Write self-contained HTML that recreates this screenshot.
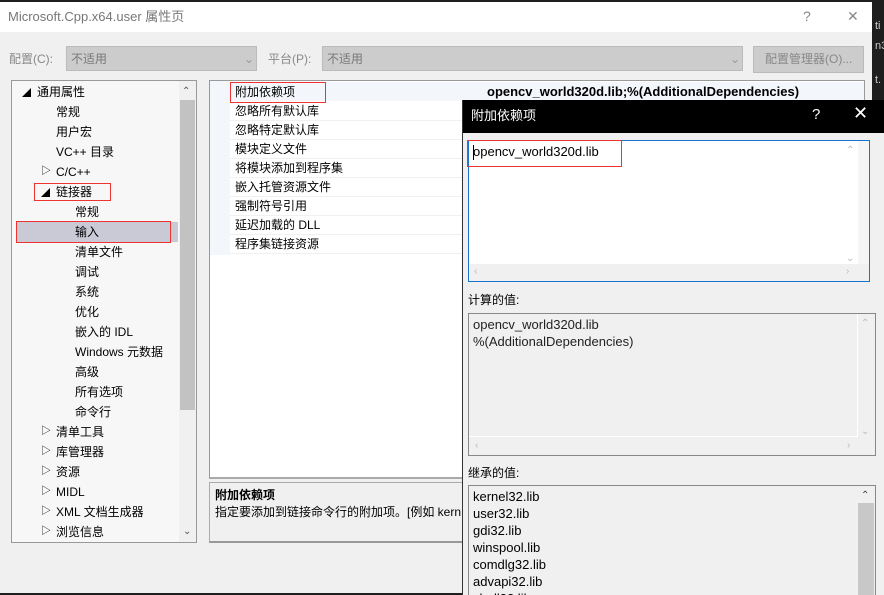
<!DOCTYPE html><html><head><meta charset="utf-8"><style>
*{box-sizing:border-box;margin:0;padding:0}
html{overflow:hidden;width:884px;height:595px}
body{width:884px;height:595px;overflow:hidden;background:#1e1e1e;font-family:"Liberation Sans","Noto Sans CJK SC",sans-serif;font-size:12px;color:#000;position:relative}
.a{position:absolute}
.t{position:absolute;white-space:nowrap;line-height:16px}
</style></head><body>
<div class="a" style="left:0;top:2px;width:872px;height:591px;background:#f0f0f0"></div>
<div class="a" style="left:0;top:2px;width:872px;height:30px;background:#fff"></div>
<div class="t" style="left:8px;top:9px;color:#777;font-size:13px">Microsoft.Cpp.x64.user 属性页</div>
<div class="t" style="left:803px;top:8px;color:#888;font-size:14px">?</div>
<div class="t" style="left:847px;top:8px;color:#888;font-size:14px">✕</div>
<div class="t" style="left:875px;top:18px;color:#ccc;font-size:11px">ti</div>
<div class="t" style="left:875px;top:38px;color:#ccc;font-size:11px">n3</div>
<div class="t" style="left:875px;top:72px;color:#ccc;font-size:11px">t.</div>
<div class="t" style="left:9px;top:51px;color:#888">配置(C):</div>
<div class="a" style="left:66px;top:46px;width:191px;height:25px;background:#ccc;border:1px solid #bbb"></div>
<div class="t" style="left:71px;top:51px;color:#777">不适用</div>
<div class="t" style="left:244px;top:51px;color:#999">⌄</div>
<div class="t" style="left:268px;top:51px;color:#888">平台(P):</div>
<div class="a" style="left:322px;top:46px;width:421px;height:25px;background:#ccc;border:1px solid #bbb"></div>
<div class="t" style="left:327px;top:51px;color:#777">不适用</div>
<div class="t" style="left:730px;top:51px;color:#999">⌄</div>
<div class="a" style="left:753px;top:46px;width:111px;height:27px;background:#ccc;border:1px solid #bbb"></div>
<div class="t" style="left:765px;top:51px;color:#888">配置管理器(O)...</div>
<!-- tree -->
<div class="a" style="left:11px;top:80px;width:186px;height:463px;background:#f7f7f7;border:1px solid #999"></div>
<div class="a" style="left:179px;top:81px;width:17px;height:461px;background:#f0f0f0"></div>
<div class="a" style="left:180px;top:100px;width:15px;height:310px;background:#c2c2c2"></div>
<div class="t" style="left:182px;top:84px;color:#555;font-size:10px">⌃</div>
<div class="t" style="left:183px;top:524px;color:#555;font-size:10px">⌄</div>
<div class="a" style="left:16px;top:222px;width:162px;height:20px;background:#c9cad6"></div>
<div class="a" style="left:16px;top:221px;width:155px;height:22px;border:1px solid #e33"></div>
<div class="a" style="left:34px;top:183px;width:77px;height:18px;border:1px solid #e33"></div>
<div class="t" style="left:22px;top:85px;font-size:9px">◢</div><div class="t" style="left:37px;top:84px">通用属性</div>
<div class="t" style="left:56px;top:104px">常规</div>
<div class="t" style="left:56px;top:124px">用户宏</div>
<div class="t" style="left:56px;top:144px">VC++ 目录</div>
<div class="t" style="left:41px;top:164px;font-size:10px">▷</div><div class="t" style="left:56px;top:164px">C/C++</div>
<div class="t" style="left:41px;top:185px;font-size:9px">◢</div><div class="t" style="left:56px;top:184px">链接器</div>
<div class="t" style="left:75px;top:204px">常规</div>
<div class="t" style="left:75px;top:224px">输入</div>
<div class="t" style="left:75px;top:244px">清单文件</div>
<div class="t" style="left:75px;top:264px">调试</div>
<div class="t" style="left:75px;top:284px">系统</div>
<div class="t" style="left:75px;top:304px">优化</div>
<div class="t" style="left:75px;top:324px">嵌入的 IDL</div>
<div class="t" style="left:75px;top:344px">Windows 元数据</div>
<div class="t" style="left:75px;top:364px">高级</div>
<div class="t" style="left:75px;top:384px">所有选项</div>
<div class="t" style="left:75px;top:404px">命令行</div>
<div class="t" style="left:41px;top:424px;font-size:10px">▷</div><div class="t" style="left:56px;top:424px">清单工具</div>
<div class="t" style="left:41px;top:444px;font-size:10px">▷</div><div class="t" style="left:56px;top:444px">库管理器</div>
<div class="t" style="left:41px;top:464px;font-size:10px">▷</div><div class="t" style="left:56px;top:464px">资源</div>
<div class="t" style="left:41px;top:484px;font-size:10px">▷</div><div class="t" style="left:56px;top:484px">MIDL</div>
<div class="t" style="left:41px;top:504px;font-size:10px">▷</div><div class="t" style="left:56px;top:504px">XML 文档生成器</div>
<div class="t" style="left:41px;top:524px;font-size:10px">▷</div><div class="t" style="left:56px;top:524px">浏览信息</div>
<!-- grid -->
<div class="a" style="left:209px;top:80px;width:656px;height:399px;background:#fff;border:1px solid #999;border-bottom:2px solid #aaa"></div>
<div class="a" style="left:210px;top:81px;width:20px;height:174px;background:#f3f6fb"></div>
<div class="a" style="left:230px;top:82px;width:634px;height:19px;background:#f3f6fb"></div>
<div class="a" style="left:230px;top:82px;width:96px;height:21px;border:1px solid #e33"></div>
<div class="t" style="left:235px;top:84px">附加依赖项</div>
<div class="t" style="left:487px;top:84px;font-weight:bold;font-size:13px">opencv_world320d.lib;%(AdditionalDependencies)</div>
<div class="a" style="left:230px;top:120px;width:234px;height:0;border-top:1px solid #eef0f4"></div>
<div class="a" style="left:230px;top:139px;width:234px;height:0;border-top:1px solid #eef0f4"></div>
<div class="a" style="left:230px;top:158px;width:234px;height:0;border-top:1px solid #eef0f4"></div>
<div class="a" style="left:230px;top:177px;width:234px;height:0;border-top:1px solid #eef0f4"></div>
<div class="a" style="left:230px;top:196px;width:234px;height:0;border-top:1px solid #eef0f4"></div>
<div class="a" style="left:230px;top:215px;width:234px;height:0;border-top:1px solid #eef0f4"></div>
<div class="a" style="left:230px;top:234px;width:234px;height:0;border-top:1px solid #eef0f4"></div>
<div class="a" style="left:230px;top:253px;width:234px;height:0;border-top:1px solid #eef0f4"></div>
<div class="t" style="left:235px;top:103px">忽略所有默认库</div>
<div class="t" style="left:235px;top:122px">忽略特定默认库</div>
<div class="t" style="left:235px;top:141px">模块定义文件</div>
<div class="t" style="left:235px;top:160px">将模块添加到程序集</div>
<div class="t" style="left:235px;top:179px">嵌入托管资源文件</div>
<div class="t" style="left:235px;top:198px">强制符号引用</div>
<div class="t" style="left:235px;top:217px">延迟加载的 DLL</div>
<div class="t" style="left:235px;top:236px">程序集链接资源</div>
<div class="a" style="left:209px;top:482px;width:300px;height:61px;background:#f0f0f0;border:1px solid #aaa;border-bottom:2px solid #999"></div>
<div class="t" style="left:215px;top:487px;font-weight:bold">附加依赖项</div>
<div class="t" style="left:215px;top:504px">指定要添加到链接命令行的附加项。[例如 kern</div>
<!-- inner dialog -->
<div class="a" style="left:462px;top:100px;width:422px;height:495px;background:#f0f0f0;border-left:1px solid #333;overflow:hidden">
<div class="a" style="left:0;top:0;width:422px;height:33px;background:#000"></div>
<div class="t" style="left:8px;top:8px;color:#fff;font-size:13px">附加依赖项</div>
<div class="t" style="left:349px;top:7px;color:#fff;font-size:15px">?</div>
<div class="t" style="left:390px;top:5px;color:#fff;font-size:18px">✕</div>
<div class="a" style="left:5px;top:40px;width:402px;height:142px;background:#fff;border:1px solid #1a73d0"></div>
<div class="a" style="left:395px;top:41px;width:11px;height:123px;background:#f5f5f5"></div>
<div class="a" style="left:6px;top:164px;width:400px;height:17px;background:#f0f0f0"></div>
<div class="t" style="left:383px;top:43px;color:#bbb;font-size:10px">⌃</div>
<div class="t" style="left:383px;top:151px;color:#bbb;font-size:10px">⌄</div>
<div class="t" style="left:11px;top:164px;color:#bbb;font-size:10px">‹</div>
<div class="t" style="left:383px;top:164px;color:#bbb;font-size:10px">›</div>
<div class="a" style="left:4px;top:40px;width:155px;height:27px;border:1px solid #e33"></div>
<div class="a" style="left:10px;top:45px;width:1px;height:15px;background:#000"></div>
<div class="t" style="left:10px;top:44px;font-size:13px">opencv_world320d.lib</div>
<div class="t" style="left:5px;top:192px">计算的值:</div>
<div class="a" style="left:5px;top:213px;width:408px;height:143px;border:1px solid #888"></div>
<div class="a" style="left:6px;top:214px;width:389px;height:123px;border-right:1px solid #fff;border-bottom:1px solid #fff"></div>
<div class="t" style="left:10px;top:217px;font-size:13px;color:#222">opencv_world320d.lib</div>
<div class="t" style="left:10px;top:234px;font-size:13px;color:#222">%(AdditionalDependencies)</div>
<div class="t" style="left:398px;top:216px;color:#bbb;font-size:10px">⌃</div>
<div class="t" style="left:398px;top:324px;color:#bbb;font-size:10px">⌄</div>
<div class="t" style="left:12px;top:338px;color:#bbb;font-size:10px">‹</div>
<div class="t" style="left:384px;top:338px;color:#bbb;font-size:10px">›</div>
<div class="t" style="left:5px;top:365px">继承的值:</div>
<div class="a" style="left:5px;top:385px;width:408px;height:115px;border:1px solid #888"></div>
<div class="a" style="left:395px;top:403px;width:16px;height:92px;background:#c8c8c8"></div>
<div class="t" style="left:398px;top:388px;color:#444;font-size:10px">⌃</div>
<div class="t" style="left:10px;top:389px;font-size:13px">kernel32.lib</div>
<div class="t" style="left:10px;top:406px;font-size:13px">user32.lib</div>
<div class="t" style="left:10px;top:423px;font-size:13px">gdi32.lib</div>
<div class="t" style="left:10px;top:440px;font-size:13px">winspool.lib</div>
<div class="t" style="left:10px;top:457px;font-size:13px">comdlg32.lib</div>
<div class="t" style="left:10px;top:474px;font-size:13px">advapi32.lib</div>
<div class="t" style="left:10px;top:491px;font-size:13px">shell32.lib</div>
</div>
</body></html>
